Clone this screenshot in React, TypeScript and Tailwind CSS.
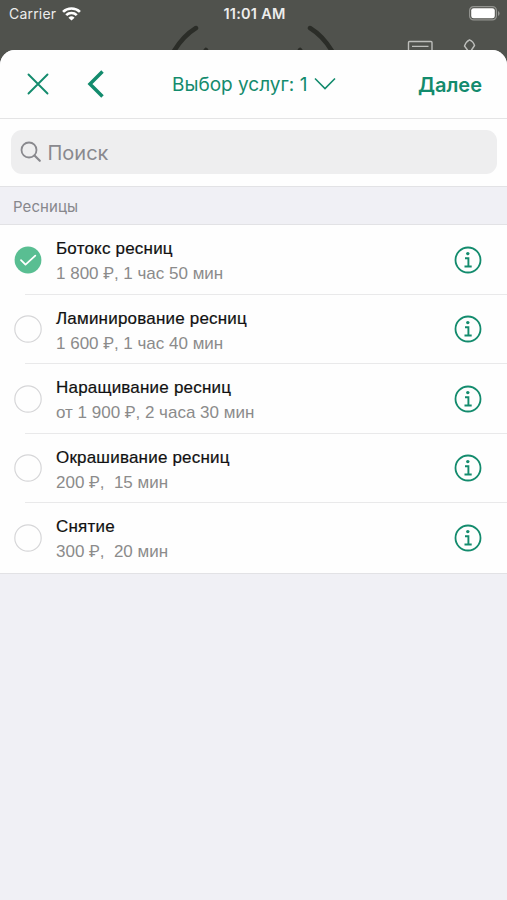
import React from 'react';

type Service = { name: string; price: string; duration: string; selected?: boolean };

const services: Service[] = [
  { name: 'Ботокс ресниц', price: '1 800 ', duration: ', 1 час 50 мин', selected: true },
  { name: 'Ламинирование ресниц', price: '1 600 ', duration: ', 1 час 40 мин' },
  { name: 'Наращивание ресниц', price: 'от 1 900 ', duration: ', 2 часа 30 мин' },
  { name: 'Окрашивание ресниц', price: '200 ', duration: ',  15 мин' },
  { name: 'Снятие', price: '300 ', duration: ',  20 мин' },
];

function StatusBar() {
  return (
    <div className="grid h-[27px] grid-cols-3 items-center pl-[9px] pr-[7px] text-[14px] leading-none text-[#ededec]">
      <div className="flex items-center gap-[6px]">
        <span className="tracking-[0.2px]">Carrier</span>
        <svg width="19" height="14" viewBox="0 0 18 14" preserveAspectRatio="none" fill="none" stroke="#fff" strokeWidth="2.5">
          <path d="M1 4.9a11.3 11.3 0 0 1 16 0" />
          <path d="M4 8.1a7 7 0 0 1 10 0" />
          <path d="M9 13.6 6.1 10.7a4.1 4.1 0 0 1 5.8 0Z" fill="#fff" stroke="none" />
        </svg>
      </div>
      <span className="whitespace-nowrap pt-px text-center text-[14.5px] font-semibold tracking-[0.25px]">11:01 AM</span>
      <svg className="justify-self-end" width="31" height="15" viewBox="0 0 31 15">
        <rect x=".6" y=".6" width="26.8" height="13.3" rx="4" fill="none" stroke="#92938f" strokeWidth="1.2" />
        <rect x="2.2" y="2.2" width="23.6" height="10.1" rx="2.4" fill="#fff" />
        <path d="M29 5v5q1.6-.7 1.6-2.5T29 5Z" fill="#92938f" />
      </svg>
    </div>
  );
}

function BackgroundHeader() {
  return (
    <svg className="block overflow-visible" width="507" height="39" viewBox="0 27 507 39" fill="none">
      <g stroke="#2b2d28" strokeWidth="4.5" strokeLinecap="round">
        <path d="M196 28q-13 8-22 23M310 28q13 8 22 23M206 50l-3 4M300 50l3 4" />
      </g>
      <g stroke="#bdbebb" strokeWidth="1.4">
        <rect x="408.500" y="41.500" width="23.500" height="18" rx="1" />
        <path d="M412 46.400h16.500M467.500 53v-3l-3-4q1.500-4.500 5-6.200 4 1.700 5 5.700l-3 4.500v3" />
      </g>
    </svg>
  );
}

function Check({ selected }: { selected?: boolean }) {
  return (
    <svg className="shrink-0" width="28" height="28" viewBox="0 0 28 28" fill="none">
      {selected ? (
        <>
          <circle cx="14" cy="14" r="13.4" fill="#59be92" />
          <path d="m7 14.2 4.5 4.4 9.8-9" stroke="#fff" strokeWidth="1.8" strokeLinecap="round" strokeLinejoin="round" />
        </>
      ) : (
        <circle cx="14" cy="14" r="13.2" stroke="#d6d6d8" strokeWidth="1.2" />
      )}
    </svg>
  );
}

function InfoIcon() {
  return (
    <svg className="shrink-0" width="28" height="28" viewBox="0 0 28 28" fill="none">
      <circle cx="14" cy="14" r="12.5" stroke="#138b6d" strokeWidth="1.8" />
      <circle cx="13.8" cy="7.6" r="1.7" fill="#138b6d" />
      <path d="M11 12.200h3.400v8.100M10.500 20.500h7.200" stroke="#138b6d" strokeWidth="1.9" />
    </svg>
  );
}

export default function App() {
  return (
    <div className="h-[900px] w-[507px] overflow-hidden bg-[#50524d] font-['Inter','Liberation_Sans',sans-serif]">
      <StatusBar />
      <BackgroundHeader />
      <main className="relative -mt-4 h-[850px] overflow-hidden rounded-t-[15px] bg-[#f0f0f5]">
        <header className="flex h-[69px] items-center border-b border-[#e4e4e5] bg-[#fefefe] text-[#138b6d]">
          <svg className="ml-[27px]" width="22" height="22" viewBox="0 0 22 22" fill="none" stroke="currentColor" strokeWidth="1.9" strokeLinecap="round">
            <path d="m1.5 1.5 19 19m0-19-19 19" />
          </svg>
          <svg className="ml-[38px]" width="18" height="28" viewBox="0 0 18 28" fill="none" stroke="currentColor" strokeWidth="3.5">
            <path d="M15.5 1.5 3 14l12.5 12.5" />
          </svg>
          <div className="ml-[67px] flex w-[164px] items-center">
            <span className="whitespace-nowrap pt-[2px] text-[19px]">Выбор услуг: 1</span>
            <svg className="ml-auto shrink-0" width="22" height="14" viewBox="0 0 22 14" fill="none" stroke="currentColor" strokeWidth="1.6">
              <path d="m1 1.5 10 10 10-10" />
            </svg>
          </div>
          <span className="ml-auto mr-[25px] pt-px text-[20px] font-semibold">Далее</span>
        </header>
        <div className="h-[67px] bg-[#fefefe] px-[10.5px] pt-[11px]">
          <div className="flex h-11 items-center rounded-[11px] bg-[#eeeeef] pl-[9px] text-[#89898e]">
            <svg width="22" height="22" viewBox="0 0 22 22" fill="none" stroke="currentColor" strokeWidth="1.8" strokeLinecap="round">
              <circle cx="9" cy="9" r="7.5" />
              <path d="m14.5 14.5 5.3 5.3" strokeWidth="2.2" />
            </svg>
            <span className="ml-[6px] pt-[2px] text-[20px]">Поиск</span>
          </div>
        </div>
        <div className="flex h-[39px] items-center border-y border-[#e2e2e5] pl-[13px] pt-[3px] text-[15px] tracking-[0.1px] text-[#87878c]">Ресницы</div>
        <ul className="border-b border-[#e2e2e5] bg-[#fefefe] font-['Liberation_Sans','Inter',sans-serif]">
          {services.map((s, i) => (
            <li key={s.name} className="flex h-[69.5px] items-stretch pl-[14px]">
              <div className="flex items-center"><Check selected={s.selected} /></div>
              <div className="ml-[14px] flex flex-1 flex-col pt-[12px]">
                <span className="whitespace-pre text-[17px] leading-[23px] tracking-[0.2px] text-[#111111] [-webkit-text-stroke:0.2px]">{s.name}</span>
                <span className="mt-[2px] whitespace-pre text-[17px] leading-[23px] text-[#8b8b8b]">
                  {s.price}
                  <span className="font-['Roboto'] text-[16px] leading-none">₽</span>
                  {s.duration}
                </span>
              </div>
              <div className="mr-[25px] flex items-center"><InfoIcon /></div>
              {i < services.length - 1 && <div className="-ml-[482px] w-[482px] shrink-0 self-end border-b border-[#e9e9ea]" />}
            </li>
          ))}
        </ul>
      </main>
    </div>
  );
}
